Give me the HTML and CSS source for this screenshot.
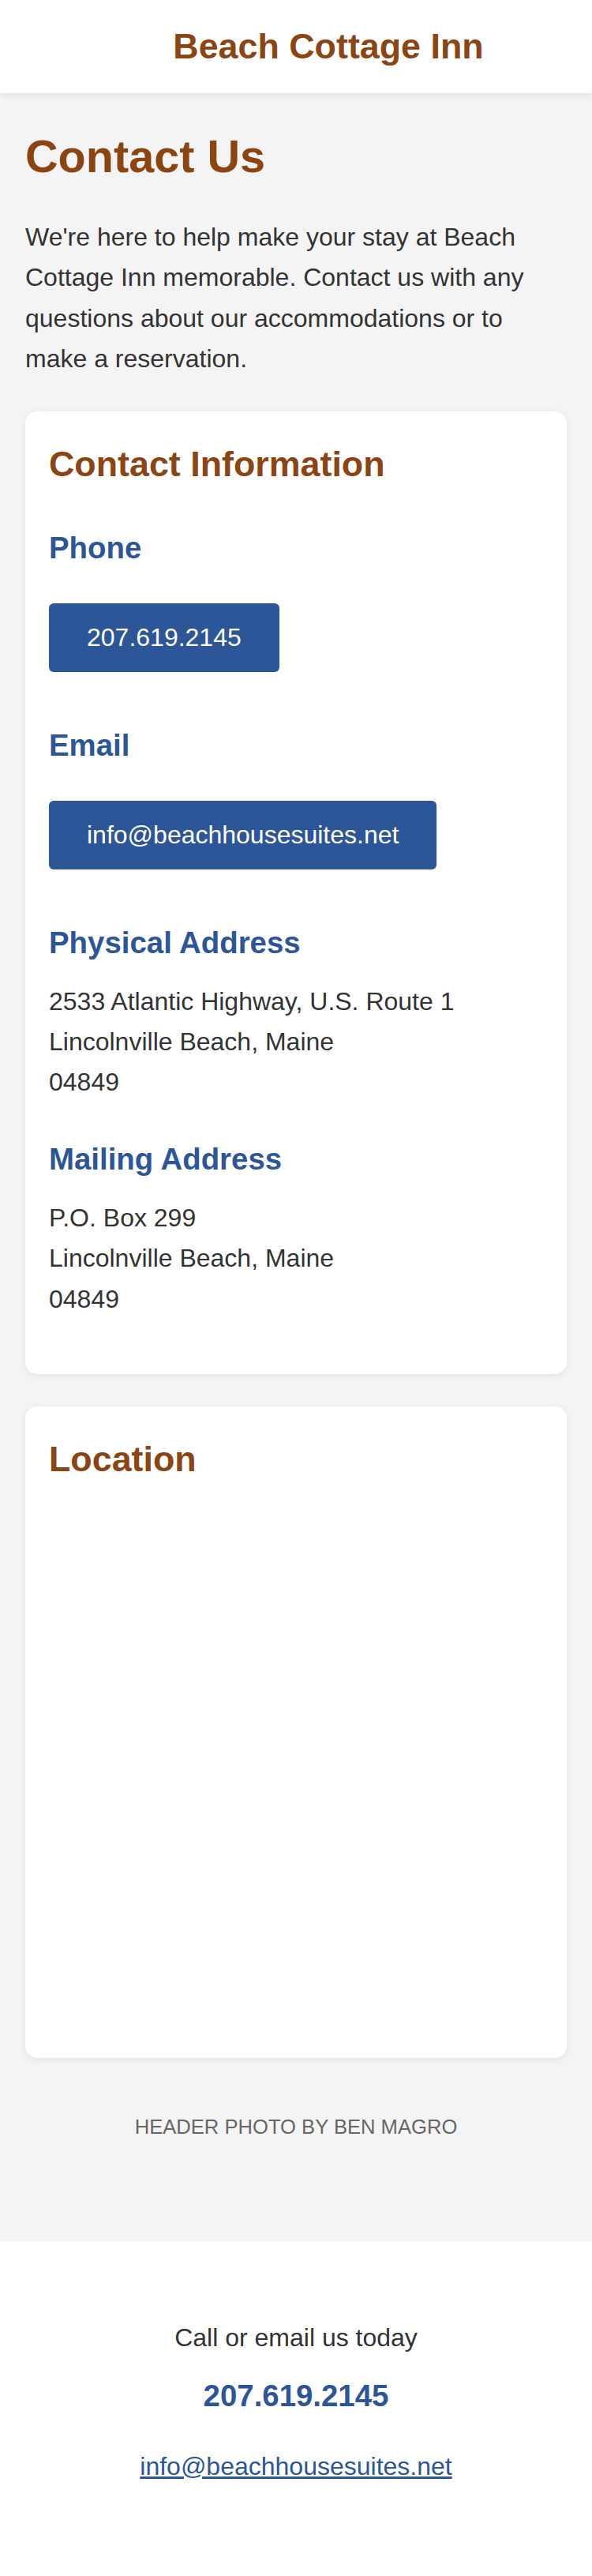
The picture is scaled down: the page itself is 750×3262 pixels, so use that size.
FILE: index.html
```html
<!DOCTYPE html>
<html lang="en">
<head>
<meta charset="utf-8">
<title>Contact Us - Beach Cottage Inn</title>
<link rel="stylesheet" href="styles.css">
</head>
<body>
<header class="site-header">
  <div class="site-title">Beach Cottage Inn</div>
</header>
<main class="main">
  <h1 class="page-title">Contact Us</h1>
  <p class="intro">We're here to help make your stay at Beach Cottage Inn memorable. Contact us with any questions about our accommodations or to make a reservation.</p>

  <section class="card contact-card">
    <h2 class="card-title">Contact Information</h2>
    <div class="item first">
      <h3 class="item-title">Phone</h3>
      <div class="btn-row"><a class="btn" href="#">207.619.2145</a></div>
    </div>
    <div class="item">
      <h3 class="item-title">Email</h3>
      <div class="btn-row"><a class="btn" href="#">info@beachhousesuites.net</a></div>
    </div>
    <div class="item">
      <h3 class="item-title">Physical Address</h3>
      <p class="addr">2533 Atlantic Highway, U.S. Route 1<br>Lincolnville Beach, Maine<br>04849</p>
    </div>
    <div class="item">
      <h3 class="item-title">Mailing Address</h3>
      <p class="addr">P.O. Box 299<br>Lincolnville Beach, Maine<br>04849</p>
    </div>
  </section>

  <section class="card map-card">
    <h2 class="card-title">Location</h2>
    <div class="map"></div>
  </section>

  <p class="credit">HEADER PHOTO BY BEN MAGRO</p>
</main>
<footer class="site-footer">
  <p class="footer-cta">Call or email us today</p>
  <p class="footer-phone">207.619.2145</p>
  <p class="footer-email"><a href="#">info@beachhousesuites.net</a></p>
</footer>
</body>
</html>
```
FILE: styles.css
```css
* { box-sizing: border-box; }
body {
  margin: 0;
  background: #f4f4f4;
  font-family: "Liberation Sans", Arial, sans-serif;
  color: #333;
}
.site-header {
  position: relative;
  z-index: 2;
  height: 118px;
  background: #fff;
  box-shadow: 0 2px 10px rgba(0,0,0,0.1);
  display: flex;
  align-items: center;
  justify-content: center;
  padding-left: 82px;
}
.site-title {
  font-size: 44.8px;
  line-height: 1.2;
  font-weight: 700;
  color: #8b4513;
}
.main {
  padding: 45.5px 32px 124.4px;
}
.page-title {
  margin: 0;
  font-size: 57.6px;
  line-height: 1.2;
  font-weight: 700;
  color: #8b4513;
}
.intro {
  margin: 42.7px 0 41px;
  font-size: 32px;
  line-height: 1.6;
  color: #333;
}
.card {
  background: #fff;
  border-radius: 15px;
  box-shadow: 0 2px 10px rgba(0,0,0,0.08);
  padding: 39.6px 30px 69px;
}
.card + .card { margin-top: 41px; }
.card-title {
  margin: 0;
  font-size: 44.8px;
  line-height: 1.2;
  font-weight: 700;
  color: #8b4513;
}
.item { margin-top: 48.8px; }
.item.first { margin-top: 56.2px; }
.item-title {
  margin: 0;
  font-size: 38.4px;
  line-height: 1.2;
  font-weight: 700;
  color: #2c5697;
}
.btn-row {
  margin-top: 47.3px;
  padding-bottom: 20.7px;
}
.btn {
  display: inline-block;
  background: #2c5697;
  color: #fff;
  text-decoration: none;
  font-size: 32px;
  line-height: 1.6;
  padding: 18px 48px;
  border-radius: 6px;
  vertical-align: top;
}
.addr {
  margin: 26px 0 0;
  font-size: 32px;
  line-height: 1.6;
  color: #333;
}
.map-card { padding: 40px 30px 30px; }
.map-card .card-title { margin-bottom: 20px; }
.map {
  height: 681px;
  background: #fff;
}
.credit {
  margin: 67.6px 0 0;
  text-align: center;
  font-size: 25.6px;
  line-height: 1.6;
  color: #666;
}
.site-footer {
  background: #fff;
  text-align: center;
  padding: 96.3px 32px 113.5px;
}
.footer-cta {
  margin: 0;
  font-size: 32px;
  line-height: 1.6;
  color: #333;
}
.footer-phone {
  margin: 25.15px 0 0;
  font-size: 38.4px;
  line-height: 1.2;
  font-weight: 700;
  color: #2c5697;
}
.footer-email {
  margin: 40.6px 0 0;
  font-size: 32px;
  line-height: 1.6;
}
.footer-email a { color: #2c5697; }
```
